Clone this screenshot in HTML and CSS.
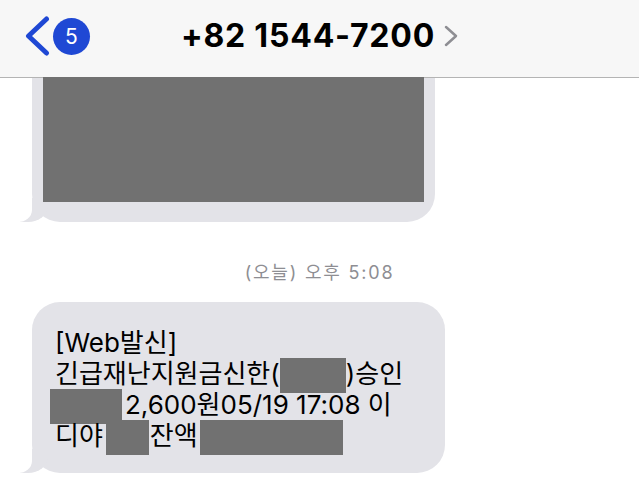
FILE: index.html
```html
<!doctype html>
<html lang="ko">
  <head>
    <meta charset="UTF-8" />
    <meta name="viewport" content="width=device-width, initial-scale=1.0" />
    <title>+82 1544-7200</title>
    <link rel="stylesheet" href="styles.css">
  </head>
  <body>
    <header class="nav">
      <div class="nav-left">
        <svg class="back" width="26" height="40" viewBox="0 0 26 40">
          <polyline points="21.5,3 3.5,20 21.5,37" />
        </svg>
        <span class="badge">5</span>
      </div>
      <div class="nav-title">
        <span class="number">+82 1544-7200</span>
        <svg class="more" width="14" height="22" viewBox="0 0 14 22">
          <polyline points="2,2 12,11 2,20" />
        </svg>
      </div>
      <div></div>
    </header>

    <main class="thread">
      <div class="bubble bubble-top">
        <div class="redact-block"></div>
      </div>

      <p class="stamp">(오늘) 오후 5:08</p>

      <div class="bubble bubble-msg">
        <p class="msg">[Web발신]<br>긴급재난지원금신한(<span class="redact r-card"></span>)승인<br><span class="redact r-store"></span>2,600원05/19 17:08 이<br>디야<span class="redact r-name"></span>잔액<span class="redact r-bal"></span></p>
      </div>
    </main>
  </body>
</html>
```

FILE: styles.css
```css
body {
  margin: 0;
  background: #fff;
  font-family: Inter, "Noto Sans CJK KR", sans-serif;
  color: #000;
}

/* top bar */
.nav {
  position: relative;
  z-index: 1;
  display: grid;
  grid-template-columns: 1fr auto 1fr;
  align-items: center;
  height: 72px;
  padding-bottom: 5px;
  background: #f7f7f7;
  border-bottom: 1px solid #b4b4b4;
}
.nav-left {
  display: flex;
  align-items: center;
  padding-left: 25px;
}
.back polyline {
  fill: none;
  stroke: #1f48d4;
  stroke-width: 5;
  stroke-linecap: round;
  stroke-linejoin: round;
}
.badge {
  display: flex;
  align-items: center;
  justify-content: center;
  width: 37px;
  height: 37px;
  margin-left: 2px;
  border-radius: 50%;
  background: #1f48d4;
  color: #fff;
  font-size: 21px;
}
.nav-title {
  display: flex;
  align-items: center;
  gap: 9px;
}
.number {
  font-size: 32px;
  font-weight: 700;
  line-height: 32px;
  letter-spacing: 0.8px;
}
.more polyline {
  fill: none;
  stroke: #8e8e93;
  stroke-width: 2.5;
  stroke-linecap: round;
  stroke-linejoin: round;
}

/* messages */
.thread {
  display: flex;
  flex-direction: column;
  align-items: flex-start;
}
.bubble {
  position: relative;
  margin-left: 32px;
  background: #e3e3e8;
  border-radius: 28px;
}
.bubble::before {
  content: "";
  position: absolute;
  left: -12px;
  bottom: 0;
  width: 28px;
  height: 24px;
  background: #e3e3e8;
  border-bottom-right-radius: 20px 16px;
}
.bubble::after {
  content: "";
  position: absolute;
  left: -18px;
  bottom: 0;
  width: 18px;
  height: 26px;
  background: #fff;
  border-bottom-right-radius: 14px 12px;
}
.bubble-top {
  width: 381px;
  margin-top: -41px;
  padding: 40px 11px 20px;
}
.redact-block {
  position: relative;
  z-index: 2;
  height: 125px;
  background: #717171;
}
.stamp {
  align-self: center;
  margin: 41px 0 19px;
  font-size: 18px;
  line-height: 20px;
  letter-spacing: 1.8px;
  color: #8e8e93;
}
.bubble-msg {
  width: 390px;
  padding: 25px 0 22px 23px;
}
.msg {
  margin: 0;
  font-size: 26px;
  line-height: 31px;
  white-space: nowrap;
}
.redact {
  display: inline-block;
  height: 35px;
  margin-top: -10px;
  margin-bottom: -10px;
  background: #717171;
}
.r-card {
  width: 66px;
}
.r-store {
  width: 72px;
  margin-left: -5px;
  margin-right: 3px;
}
.r-name {
  width: 43px;
  margin: -10px 1px -10px 3px;
}
.r-bal {
  width: 143px;
  margin-left: 2px;
}
```
